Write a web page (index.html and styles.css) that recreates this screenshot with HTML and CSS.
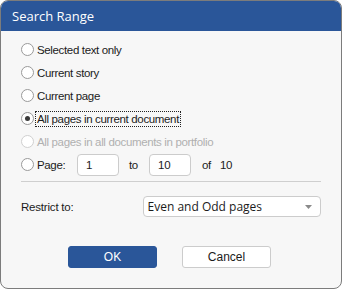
FILE: index.html
```html
<!DOCTYPE html>
<html lang="en">
<head>
  <meta charset="UTF-8">
  <title>Search Range</title>
  <meta name="viewport" content="width=device-width, initial-scale=1">
  <link rel="stylesheet" href="styles.css">
</head>

<body>

  <div class="dialog">
    <!-- Barra de título -->
    <div class="title-bar">Search Range</div>

    <div class="dialog-body">
      <!-- Opções de intervalo -->
      <div class="options">
        <label class="option"><span class="radio"></span><span>Selected text only</span></label>
        <label class="option"><span class="radio"></span><span>Current story</span></label>
        <label class="option"><span class="radio"></span><span>Current page</span></label>
        <label class="option"><span class="radio checked"></span><span class="focused">All pages in current document</span></label>
        <label class="option disabled"><span class="radio"></span><span>All pages in all documents in portfolio</span></label>
        <div class="option page-row">
          <span class="radio"></span><span class="page-label">Page:</span>
          <input type="text" class="page-input" value="1">
          <span class="to">to</span>
          <input type="text" class="page-input" value="10">
          <span class="of">of</span><span class="total">10</span>
        </div>
      </div>

      <hr class="separator">

      <div class="restrict-row">
        <span class="restrict-label">Restrict to:</span>
        <div class="select">
          <span>Even and Odd pages</span>
          <svg width="7" height="4" viewBox="0 0 7 4"><path d="M0 0h7L3.5 4z" fill="#8a8a8a"/></svg>
        </div>
      </div>

      <div class="buttons">
        <button class="btn primary">OK</button>
        <button class="btn">Cancel</button>
      </div>
    </div>
  </div>

</body>
</html>
```

FILE: styles.css
```css
body {
  margin: 0;
  width: 342px;
  height: 289px;
  background: #ffffff;
  font-family: "Liberation Sans", Arial, sans-serif;
}

.dialog {
  box-sizing: border-box;
  width: 342px;
  height: 289px;
  border: 1px solid #7c7c7c;
  border-radius: 8px;
  overflow: hidden;
  background: #f7f7f7;
  display: flex;
  flex-direction: column;
}

/* Barra de título */
.title-bar {
  height: 30px;
  background: #2a5699;
  color: #ffffff;
  font-family: "Open Sans", "Noto Sans", sans-serif;
  font-size: 13px;
  line-height: 30px;
  padding-left: 11px;
  flex-shrink: 0;
}

.dialog-body {
  padding: 7px 20px 0 20px;
}

.options {
  display: flex;
  flex-direction: column;
}

.option {
  display: flex;
  align-items: center;
  height: 23px;
  font-size: 11.5px;
  letter-spacing: -0.35px;
  color: #1b1b1b;
}

.radio {
  box-sizing: border-box;
  width: 13px;
  height: 13px;
  border: 1px solid #9a9a9a;
  border-radius: 50%;
  background: #ffffff;
  margin-right: 3px;
  display: flex;
  align-items: center;
  justify-content: center;
  flex-shrink: 0;
}

.radio.checked::after {
  content: "";
  width: 5px;
  height: 5px;
  border-radius: 50%;
  background: #3a3a3a;
}

.focused {
  outline: 1px dotted #222;
  outline-offset: 1px;
}

.disabled {
  color: #b0b0b0;
}

.disabled .radio {
  border-color: #d0d0d0;
}

.page-label {
  width: 40px;
}

.page-input {
  box-sizing: border-box;
  width: 42px;
  height: 22px;
  margin: 0;
  border: 1px solid #cccccc;
  border-radius: 4px;
  background: #ffffff;
  font-family: "Liberation Sans", Arial, sans-serif;
  font-size: 11.5px;
  color: #1b1b1b;
  padding: 0 0 0 8px;
  outline: none;
}

.to {
  margin: 0 11px 0 10px;
}

.of {
  margin-left: 11px;
  width: 18px;
}

.separator {
  border: none;
  border-top: 1px solid #cfcfcf;
  margin: 5px 0 0 0;
}

.restrict-row {
  display: flex;
  align-items: center;
  margin-top: 14px;
  font-size: 11.5px;
  letter-spacing: -0.2px;
  color: #1b1b1b;
}

.restrict-label {
  width: 122px;
}

.select {
  box-sizing: border-box;
  width: 179px;
  height: 21px;
  border: 1px solid #cccccc;
  border-radius: 4px;
  background: #ffffff;
  display: flex;
  align-items: center;
  justify-content: space-between;
  padding: 0 8px 0 4px;
  font-family: "Open Sans", "Noto Sans", sans-serif;
  font-size: 12px;
  letter-spacing: 0;
  color: #1b1b1b;
}

.buttons {
  display: flex;
  gap: 25px;
  padding-left: 47px;
  margin-top: 29px;
}

.btn {
  box-sizing: border-box;
  width: 89px;
  height: 22px;
  margin: 0;
  border: 1px solid #cccccc;
  border-radius: 3px;
  background: #ffffff;
  font-family: "Liberation Sans", Arial, sans-serif;
  font-size: 12px;
  color: #1b1b1b;
}

.btn.primary {
  background: #2a5699;
  border-color: #2a5699;
  color: #ffffff;
}
```
